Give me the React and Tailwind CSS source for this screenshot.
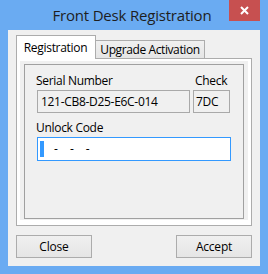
const font = { fontFamily: '"Open Sans", "Noto Sans", sans-serif' };

const Label = ({ children, className = "" }) => (
  <div className={`h-[16px] leading-[16px] text-[12px] tracking-[-0.3px] text-black ${className}`}>
    {children}
  </div>
);

const Button = ({ children }) => (
  <button className="w-[76px] h-[23px] border border-[#acacac] bg-gradient-to-b from-[#f0f0f0] to-[#e5e5e5] text-[12px] leading-[16px] tracking-[-0.2px] text-black">
    {children}
  </button>
);

const App = () => {
  return (
    <div
      className="w-[268px] h-[274px] bg-[#6aabf2] flex flex-col overflow-hidden"
      style={font}
    >
      {/* title bar */}
      <div className="h-[30px] flex items-start">
        <div className="w-[39px]" />
        <div className="flex-1 text-center text-[15px] leading-[20px] pt-[5px] tracking-[-0.2px] text-[#1e1e1e] pr-[4px]">
          Front Desk Registration
        </div>
        <div className="w-[31px] h-[21px] bg-[#c75050] flex items-center justify-center">
          <svg width="9" height="9" viewBox="0 0 9 9">
            <path d="M1 1L8 8M8 1L1 8" stroke="#fff" strokeWidth="2" />
          </svg>
        </div>
        <div className="w-[8px]" />
      </div>

      {/* client area */}
      <div className="mx-[8px] h-[236px] bg-[#f0f0f0] px-[8px] pt-[5px] flex flex-col">
        <div className="h-[23px] flex items-end">
          <div className="w-[80px] h-[24px] -mb-[1px] relative z-10 bg-white border border-b-0 border-[#acacac] flex items-center justify-center text-[12px] leading-[16px] tracking-[-0.3px] text-black pr-[1px]">
            Registration
          </div>
          <div className="w-[109px] h-[18px] border-t border-r border-[#acacac] bg-gradient-to-b from-[#f0f0f0] to-[#e5e5e5] flex items-center justify-center text-[12px] leading-[16px] tracking-[-0.4px] text-black whitespace-nowrap">
            Upgrade Activation
          </div>
        </div>

        <div className="h-[168px] border border-[#acacac] bg-white pt-[2px] px-[3px] pb-[5px] flex flex-col">
          <div className="flex-1 bg-[#f0f0f0] pt-[3px] px-[4px] pb-[1px] flex flex-col">
            <div className="flex-1 border border-[#a0a0a0] pt-[8px] pl-[12px]">
              <div className="flex gap-[3px]">
                <div className="w-[153px]">
                  <Label className="-ml-[1px] mb-[1px]">Serial Number</Label>
                  <div className="h-[23px] border border-[#a9a9a9] bg-[#f0f0f0] pl-[3px] flex items-center text-[12px] tracking-[-0.3px] text-black">
                    121-CB8-D25-E6C-014
                  </div>
                </div>
                <div className="w-[37px]">
                  <Label className="ml-[2px] mb-[1px]">Check</Label>
                  <div className="h-[23px] border border-[#a9a9a9] bg-[#f0f0f0] pl-[2px] flex items-center text-[12px] tracking-[-0.3px] text-black">
                    7DC
                  </div>
                </div>
              </div>
              <Label className="-ml-[1px] mt-[7px] mb-[1px]">Unlock Code</Label>
              <div className="w-[194px] h-[24px] border border-[#3399ff] bg-white pl-[2px] flex items-center text-[12px] text-black">
                <span className="w-[4px] h-[16px] bg-[#3399ff]" />
                <span className="ml-[10px]">-</span>
                <span className="ml-[12px]">-</span>
                <span className="ml-[12px]">-</span>
              </div>
            </div>
          </div>
        </div>

        <div className="mt-[9px] flex justify-between">
          <Button>Close</Button>
          <Button>Accept</Button>
        </div>
      </div>
    </div>
  );
};

export default App;
